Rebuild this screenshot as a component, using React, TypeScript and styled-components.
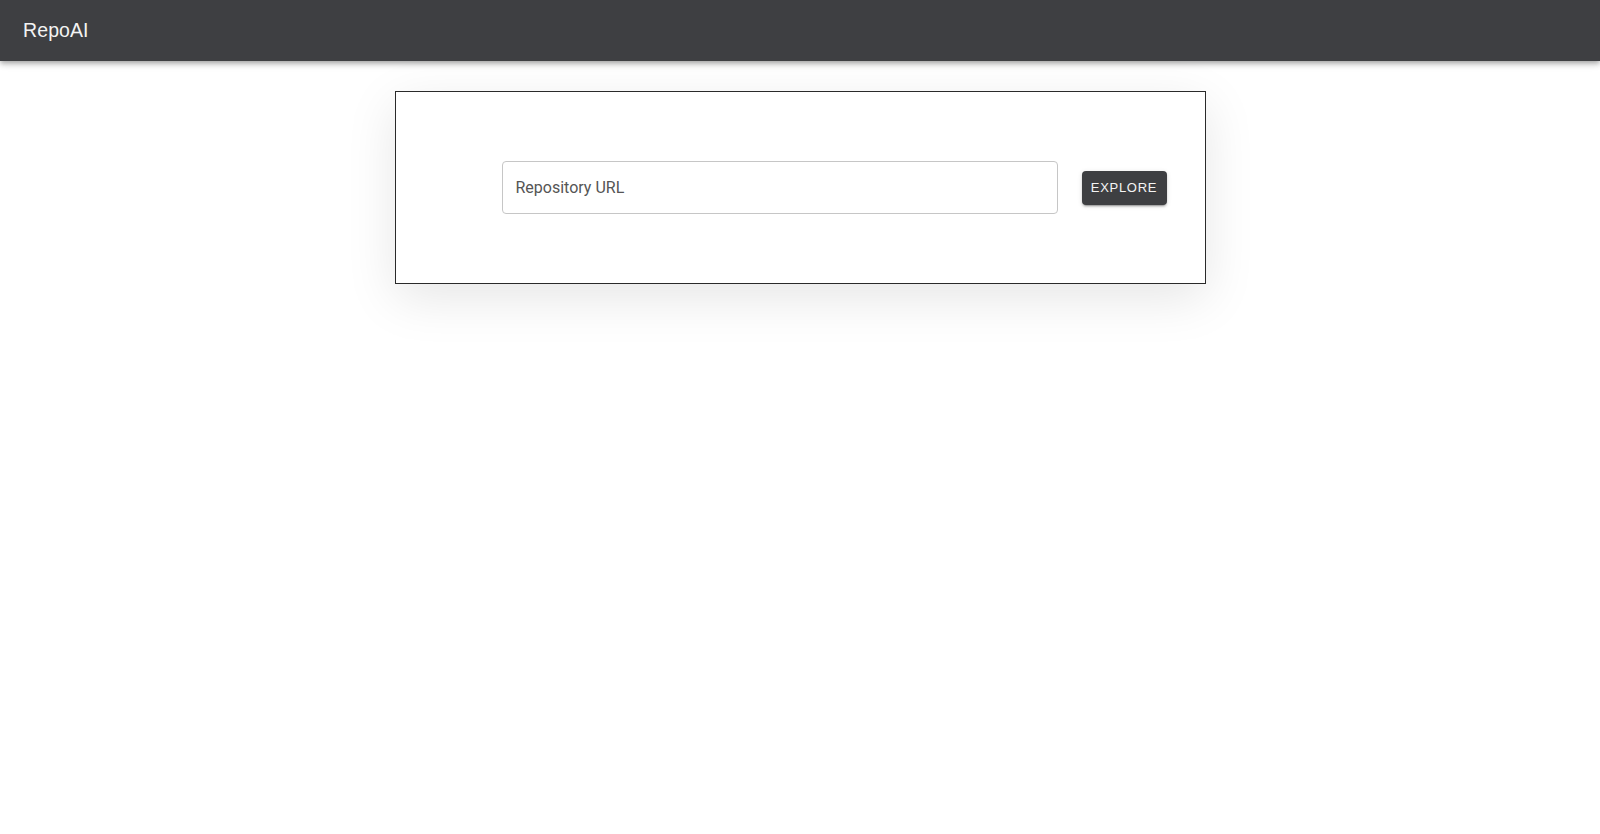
import React from "react";
import styled, { createGlobalStyle } from "styled-components";

const Global = createGlobalStyle`
  html, body { margin: 0; padding: 0; background: #ffffff; }
  body { font-family: Roboto, "Liberation Sans", Arial, sans-serif; }
  * { box-sizing: border-box; }
`;

const Page = styled.div`
  min-height: 834px;
  display: flex;
  flex-direction: column;
`;

const AppBar = styled.header`
  height: 61px;
  background: #3e3f42;
  display: flex;
  align-items: center;
  padding: 0 23px;
  box-shadow: 0 2px 4px -1px rgba(0,0,0,0.2), 0 4px 5px 0 rgba(0,0,0,0.14), 0 1px 10px 0 rgba(0,0,0,0.12);
  position: relative;
  z-index: 2;
`;

const Title = styled.h1`
  margin: 0;
  font-family: "Liberation Sans", Arial, sans-serif;
  font-weight: 400;
  font-size: 19.5px;
  color: #f3f3f3;
  letter-spacing: 0.1px;
`;

const Main = styled.main`
  display: flex;
  justify-content: center;
  padding-top: 30px;
`;

const Card = styled.section`
  width: 811px;
  height: 193px;
  border: 1px solid #2a2a2a;
  background: #ffffff;
  box-shadow: 0 14px 48px rgba(0, 0, 0, 0.1);
  display: flex;
  align-items: center;
  padding: 0 38px 0 106px;
  gap: 24px;
`;

const UrlInput = styled.input`
  width: 556px;
  height: 53px;
  border: 1px solid #c6c6c6;
  border-radius: 4px;
  padding: 0 13px;
  font-family: Roboto, "Liberation Sans", Arial, sans-serif;
  font-size: 16px;
  color: #222;
  outline: none;
  &::placeholder { color: #555555; opacity: 1; }
`;

const Button = styled.button`
  width: 85px;
  height: 34px;
  border: none;
  border-radius: 4px;
  background: #3e3f42;
  color: #f4f4f4;
  font-family: "Liberation Sans", Arial, sans-serif;
  font-weight: 400;
  font-size: 13px;
  letter-spacing: 0.7px;
  text-transform: uppercase;
  cursor: pointer;
  box-shadow: 0 3px 1px -2px rgba(0,0,0,0.2), 0 2px 2px 0 rgba(0,0,0,0.14), 0 1px 5px 0 rgba(0,0,0,0.12);
`;

export default function App() {
  return (
    <Page>
      <Global />
      <AppBar>
        <Title>RepoAI</Title>
      </AppBar>
      <Main>
        <Card>
          <UrlInput placeholder="Repository URL" />
          <Button>Explore</Button>
        </Card>
      </Main>
    </Page>
  );
}
